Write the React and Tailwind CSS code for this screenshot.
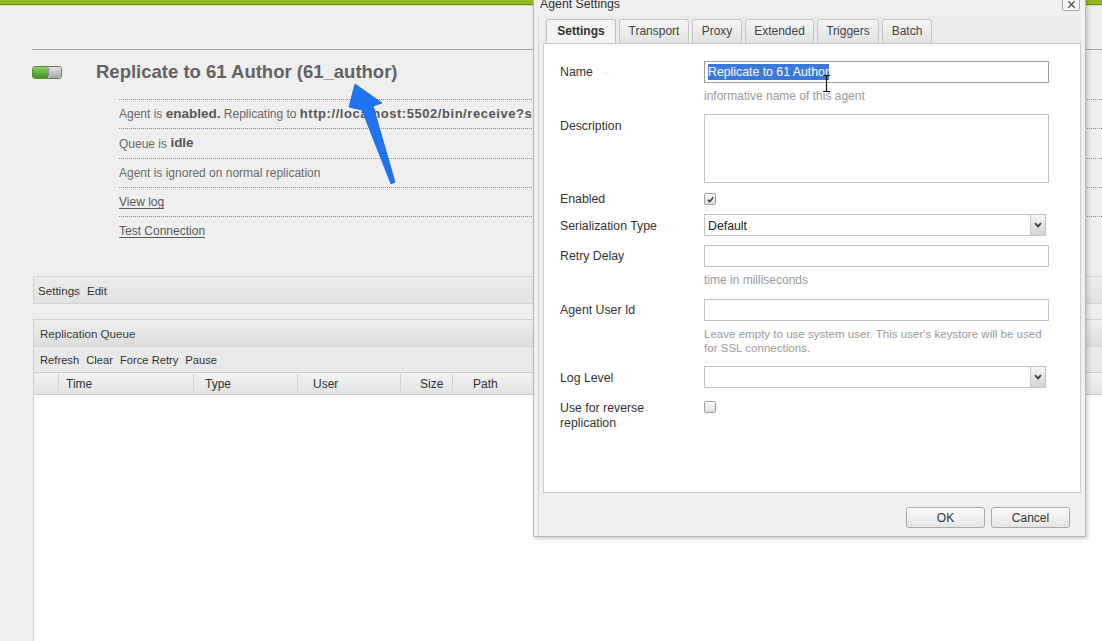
import React from "react";

function Toggle() {
  return (
    <div className="flex h-[13px] w-[30px] overflow-hidden rounded-[3px] border border-[#62814f]">
      <div className="w-[15px] bg-gradient-to-b from-[#86d25c] to-[#3f9225]" />
      <div className="flex-1 rounded-[3px] border-l border-[#8c8c8c] bg-gradient-to-b from-[#e6e6e6] to-[#a8a8a8]" />
    </div>
  );
}

function Checkbox({ checked }) {
  return (
    <div className="flex h-[12px] w-[12px] items-center justify-center rounded-[2px] border border-[#a0a0a0] bg-gradient-to-b from-[#ffffff] to-[#dcdcdc]">
      {checked && (
        <svg viewBox="0 0 10 10" className="h-[9px] w-[9px]">
          <path d="M2 5.3 L4.1 7.4 L8.2 2.4" stroke="#3a3a3a" strokeWidth="1.7" fill="none" />
        </svg>
      )}
    </div>
  );
}

function Select({ value }) {
  return (
    <div className="flex h-[22px] w-[342px] border border-[#c2c2c2] bg-white">
      <div className="flex-1 pl-[3px] pt-[1px] text-[12.3px] leading-[20px] text-[#222]">{value}</div>
      <div className="flex w-[15px] items-center justify-center border-l border-[#c8c8c8] bg-gradient-to-b from-[#f6f6f6] to-[#d2d2d2]">
        <svg viewBox="0 0 8 6" className="h-[6px] w-[8px]">
          <path d="M1 1.2 L4 4.4 L7 1.2" stroke="#3a3a3a" strokeWidth="1.7" fill="none" />
        </svg>
      </div>
    </div>
  );
}

function Input({ h = "h-[22px]", focused, children }) {
  return (
    <div
      className={`${h} w-[345px] border bg-white ${
        focused ? "border-[#9c9c9c]" : "border-[#c4c4c4]"
      }`}
    >
      {children}
    </div>
  );
}

function Hint({ size = "text-[12px]", children }) {
  return <div className={`${size} leading-[14px] text-[#9a9a9a]`}>{children}</div>;
}

function Btn({ children }) {
  return (
    <div className="flex h-[21px] w-[79px] items-center justify-center rounded-[3px] border border-[#a9a9a9] bg-gradient-to-b from-[#fdfdfd] to-[#e4e4e4] pt-[1px] text-[12px] text-[#333]">
      {children}
    </div>
  );
}

function Tab({ w, active, children }) {
  return (
    <div
      className={`${w} flex h-[24px] items-center justify-center rounded-t-[3px] border border-b-0 pb-[1px] text-[12px] ${
        active
          ? "border-[#c0c0c0] bg-[#f4f4f4] font-bold text-[#333]"
          : "border-[#c6c6c6] bg-gradient-to-b from-[#f6f6f6] to-[#e2e2e2] text-[#444]"
      }`}
    >
      {children}
    </div>
  );
}

export default function App() {
  const rowBase =
    "flex items-center whitespace-nowrap border-t border-dotted border-[#8e8e8e]";
  return (
    <div className="relative flex h-[641px] w-[1102px] flex-col overflow-hidden bg-[#efefef] font-['Liberation_Sans',Arial,Helvetica,sans-serif]">
      {/* top green bar */}
      <div className="h-[4px] shrink-0 bg-[#95b822]" />
      <div className="h-[1px] shrink-0 bg-[#6c9214]" />
      <div className="h-[1px] shrink-0 bg-[#cfe29c]" />

      <div className="flex flex-1 flex-col pl-[32px]">
        <div className="mt-[43px] border-t border-[#a6a6a6]" />

        {/* title */}
        <div className="mt-[10px] flex h-[24px] items-center">
          <Toggle />
          <div className="ml-[34px] text-[18.5px] font-bold leading-[24px] text-[#636363]">
            Replicate to 61 Author (61_author)
          </div>
        </div>

        {/* info rows */}
        <div className="ml-[87px] mt-[15px] text-[12px] text-[#6a6a6a]">
          <div className={`${rowBase} h-[29px]`}>
            Agent is&nbsp;<span className="text-[13.5px] font-bold text-[#585858]">enabled.</span>
            &nbsp;Replicating to&nbsp;
            <span className="text-[13px] font-bold tracking-[0.55px] text-[#585858]">
              http://localhost:5502/bin/receive?sling:authRequestLogin=1
            </span>
          </div>
          <div className={`${rowBase} h-[30px]`}>
            Queue is&nbsp;<span className="text-[13.5px] font-bold text-[#585858]">idle</span>
          </div>
          <div className={`${rowBase} h-[29px]`}>Agent is ignored on normal replication</div>
          <div className={`${rowBase} h-[29px]`}>
            <span className="text-[#5a5a5a] underline underline-offset-2">View log</span>
          </div>
          <div className={`${rowBase} h-[29px]`}>
            <span className="text-[#5a5a5a] underline underline-offset-2">Test Connection</span>
          </div>
        </div>

        {/* settings bar */}
        <div className="ml-[1px] mt-[31px] flex h-[28px] items-center gap-[7px] border border-r-0 border-[#d3d3d3] bg-gradient-to-b from-[#ececec] to-[#e2e2e2] pl-[4px] pt-[2px] text-[11.6px] text-[#333]">
          <span>Settings</span>
          <span>Edit</span>
        </div>

        {/* replication queue */}
        <div className="ml-[1px] mt-[15px] flex flex-1 flex-col border-l border-t border-[#d0d0d0]">
          <div className="flex h-[26px] items-center bg-gradient-to-b from-[#efefef] to-[#dddddd] pl-[6px] pt-[2px] text-[11.6px] text-[#3c3c3c]">
            Replication Queue
          </div>
          <div className="flex h-[26px] items-center gap-[7px] border-t border-[#d6d6d6] bg-[#e9e9e9] pl-[6px] pt-[1px] text-[11.2px] text-[#333]">
            <span>Refresh</span>
            <span>Clear</span>
            <span>Force Retry</span>
            <span>Pause</span>
          </div>
          <div className="flex h-[23px] items-center border-y border-[#cdcdcd] bg-gradient-to-b from-[#f3f3f3] to-[#e3e3e3] pt-[1px] text-[12px] text-[#333]">
            <div className="h-full w-[25px] border-r border-[#d4d4d4]" />
            <div className="flex h-full w-[135px] items-center border-r border-[#d4d4d4] pl-[7px]">Time</div>
            <div className="flex h-full w-[104px] items-center border-r border-[#d4d4d4] pl-[11px]">Type</div>
            <div className="flex h-full w-[103px] items-center border-r border-[#d4d4d4] pl-[15px]">User</div>
            <div className="flex h-full w-[52px] items-center border-r border-[#d4d4d4] pl-[19px]">Size</div>
            <div className="flex h-full flex-1 items-center pl-[20px]">Path</div>
          </div>
          <div className="flex-1 bg-white" />
        </div>
      </div>

      {/* blue arrow annotation */}
      <svg
        className="pointer-events-none absolute left-0 top-0"
        width="1102"
        height="641"
        viewBox="0 0 1102 641"
      >
        <polygon
          points="355,84 382,103 373,106 395,182 391,184 362,110 349,107"
          fill="#1f74f4"
          stroke="#1a5fd0"
          strokeWidth="0.8"
          strokeLinejoin="round"
        />
      </svg>

      {/* dialog */}
      <div className="absolute left-[533px] top-[-10px] flex h-[547px] w-[553px] flex-col border border-[#b9b9b9] bg-[#f0f0f0] shadow-[2px_2px_4px_rgba(0,0,0,0.18)]">
        <div className="relative h-[25px] shrink-0 pl-[6px] pt-[1px] text-[12.3px] leading-[25px] text-[#333]">
          Agent Settings
          <div className="absolute left-[528px] top-[6px] flex h-[14px] w-[18px] items-center justify-center rounded-[2px] border border-[#a8a8a8] bg-[#f7f7f7]">
            <svg viewBox="0 0 10 10" className="h-[9px] w-[9px]">
              <path d="M1.5 1.5 L8.5 8.5 M8.5 1.5 L1.5 8.5" stroke="#555" strokeWidth="1.5" />
            </svg>
          </div>
        </div>

        <div className="ml-[4px] flex flex-1 flex-col border-l border-[#d4d4d4] pl-[4px]">
          {/* tab strip */}
          <div className="flex h-[28px] w-[538px] shrink-0 items-end gap-[3px] border-b border-[#cbcbcb] bg-[#ebebeb] pl-[3px]">
            <Tab w="w-[70px]" active>Settings</Tab>
            <Tab w="w-[70px]">Transport</Tab>
            <Tab w="w-[50px]">Proxy</Tab>
            <Tab w="w-[69px]">Extended</Tab>
            <Tab w="w-[62px]">Triggers</Tab>
            <Tab w="w-[50px]">Batch</Tab>
          </div>

          {/* body */}
          <div className="h-[449px] w-[538px] shrink-0 border border-t-0 border-[#cfcfcf] bg-white pl-[16px] text-[12.3px] text-[#333]">
            {/* Name */}
            <div className="mt-[17px] flex">
              <div className="w-[144px] pt-[4px] leading-[14px]">Name</div>
              <div>
                <Input focused>
                  <div className="flex h-full items-center pl-[3px]">
                    <span className="bg-[#3a78dc] leading-[16px] text-white">Replicate to 61 Author</span>
                  </div>
                </Input>
                <div className="mt-[6px]">
                  <Hint>informative name of this agent</Hint>
                </div>
              </div>
            </div>

            {/* Description */}
            <div className="mt-[11px] flex">
              <div className="w-[144px] pt-[5px] leading-[14px]">Description</div>
              <Input h="h-[69px]" />
            </div>

            {/* Enabled */}
            <div className="mt-[9px] flex h-[14px] items-center">
              <div className="w-[144px] leading-[14px]">Enabled</div>
              <Checkbox checked />
            </div>

            {/* Serialization Type */}
            <div className="mt-[8px] flex h-[22px] items-center">
              <div className="w-[144px] pt-[1px] leading-[14px]">Serialization Type</div>
              <Select value="Default" />
            </div>

            {/* Retry Delay */}
            <div className="mt-[9px] flex">
              <div className="w-[144px] pt-[4px] leading-[14px]">Retry Delay</div>
              <div>
                <Input />
                <div className="mt-[6px]">
                  <Hint>time in milliseconds</Hint>
                </div>
              </div>
            </div>

            {/* Agent User Id */}
            <div className="mt-[12px] flex">
              <div className="w-[144px] pt-[4px] leading-[14px]">Agent User Id</div>
              <div>
                <Input />
                <div className="mt-[6px] w-[360px]">
                  <Hint size="text-[11.55px]">
                    Leave empty to use system user. This user's keystore will be used
                    <br />
                    for SSL connections.
                  </Hint>
                </div>
              </div>
            </div>

            {/* Log Level */}
            <div className="mt-[11px] flex h-[22px] items-center">
              <div className="w-[144px] pt-[1px] leading-[14px]">Log Level</div>
              <Select value="" />
            </div>

            {/* reverse */}
            <div className="mt-[12px] flex">
              <div className="w-[144px] pr-[14px] pt-[1px] leading-[15px]">Use for reverse replication</div>
              <div className="pt-[1px]">
                <Checkbox />
              </div>
            </div>
          </div>

          {/* footer */}
          <div className="flex w-[538px] flex-1 justify-end gap-[6px] pr-[11px] pt-[14px]">
            <Btn>OK</Btn>
            <Btn>Cancel</Btn>
          </div>
        </div>
      </div>

      {/* text cursor (I-beam) */}
      <svg
        className="pointer-events-none absolute left-[822px] top-[75px]"
        width="9"
        height="17"
        viewBox="0 0 9 17"
      >
        <path d="M1 0.5 H8 M4.5 0.5 V16.5 M1 16.5 H8" stroke="#111" strokeWidth="1.2" fill="none" />
      </svg>
    </div>
  );
}
